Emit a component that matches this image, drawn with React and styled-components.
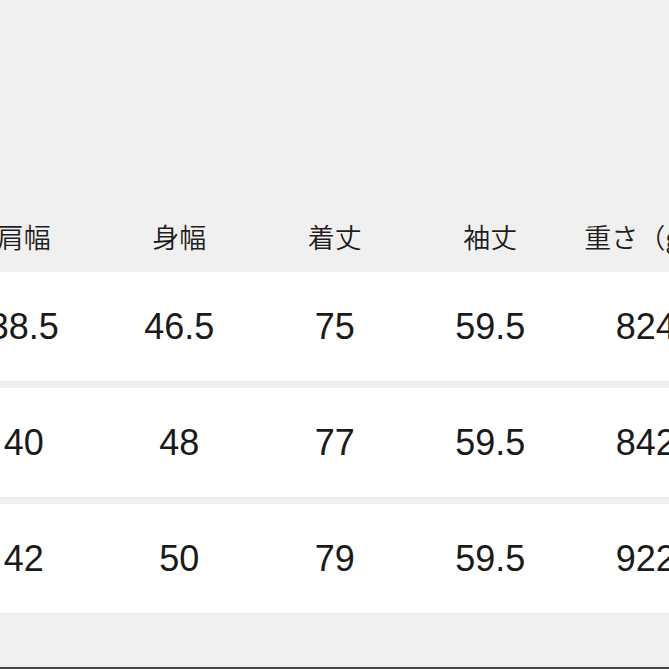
import React from "react";
import styled, { createGlobalStyle } from "styled-components";

const columns = ["肩幅", "身幅", "着丈", "袖丈", "重さ（g）"];

const rows = [
  ["38.5", "46.5", "75", "59.5", "824"],
  ["40", "48", "77", "59.5", "842"],
  ["42", "50", "79", "59.5", "922"],
];

const GlobalStyle = createGlobalStyle`
  html, body {
    margin: 0;
    padding: 0;
    background: #f0f0f0;
  }
`;

export default function App() {
  return (
    <>
      <GlobalStyle />
      <Page>
        <Table>
          <HeadRow>
            {columns.map((c) => (
              <HeadCell key={c}>{c}</HeadCell>
            ))}
          </HeadRow>
          <Body>
            {rows.map((r, i) => (
              <Row key={i}>
                {r.map((v, j) => (
                  <Cell key={j}>{v}</Cell>
                ))}
              </Row>
            ))}
          </Body>
        </Table>
      </Page>
    </>
  );
}

const Page = styled.div`
  width: 669px;
  height: 669px;
  box-sizing: border-box;
  background: #f0f0f0;
  border-bottom: 2px solid #444;
  overflow: hidden;
  padding-top: 201px;
`;

// table is wider than the window, the first and last columns get cropped
const Table = styled.div`
  width: 778px;
  margin-left: -54px;
  display: flex;
  flex-direction: column;
`;

const HeadRow = styled.div`
  display: grid;
  grid-template-columns: repeat(5, 155.5px);
  height: 71px;
  align-items: center;
`;

const HeadCell = styled.div`
  text-align: center;
  white-space: nowrap;
  font-family: "Noto Sans CJK JP", "Liberation Sans", sans-serif;
  font-size: 27px;
  font-weight: 350;
  color: #1e1e1e;
  line-height: 1;
`;

const Body = styled.div`
  display: flex;
  flex-direction: column;
  gap: 7px;
`;

const Row = styled.div`
  display: grid;
  grid-template-columns: repeat(5, 155.5px);
  height: 109px;
  align-items: center;
  background: #fff;
  box-shadow: 0 1px 2px rgba(0, 0, 0, 0.03);
`;

const Cell = styled.div`
  text-align: center;
  white-space: nowrap;
  font-family: "Liberation Sans", Arial, sans-serif;
  font-size: 36px;
  color: #1a1a1a;
  line-height: 1;
`;
